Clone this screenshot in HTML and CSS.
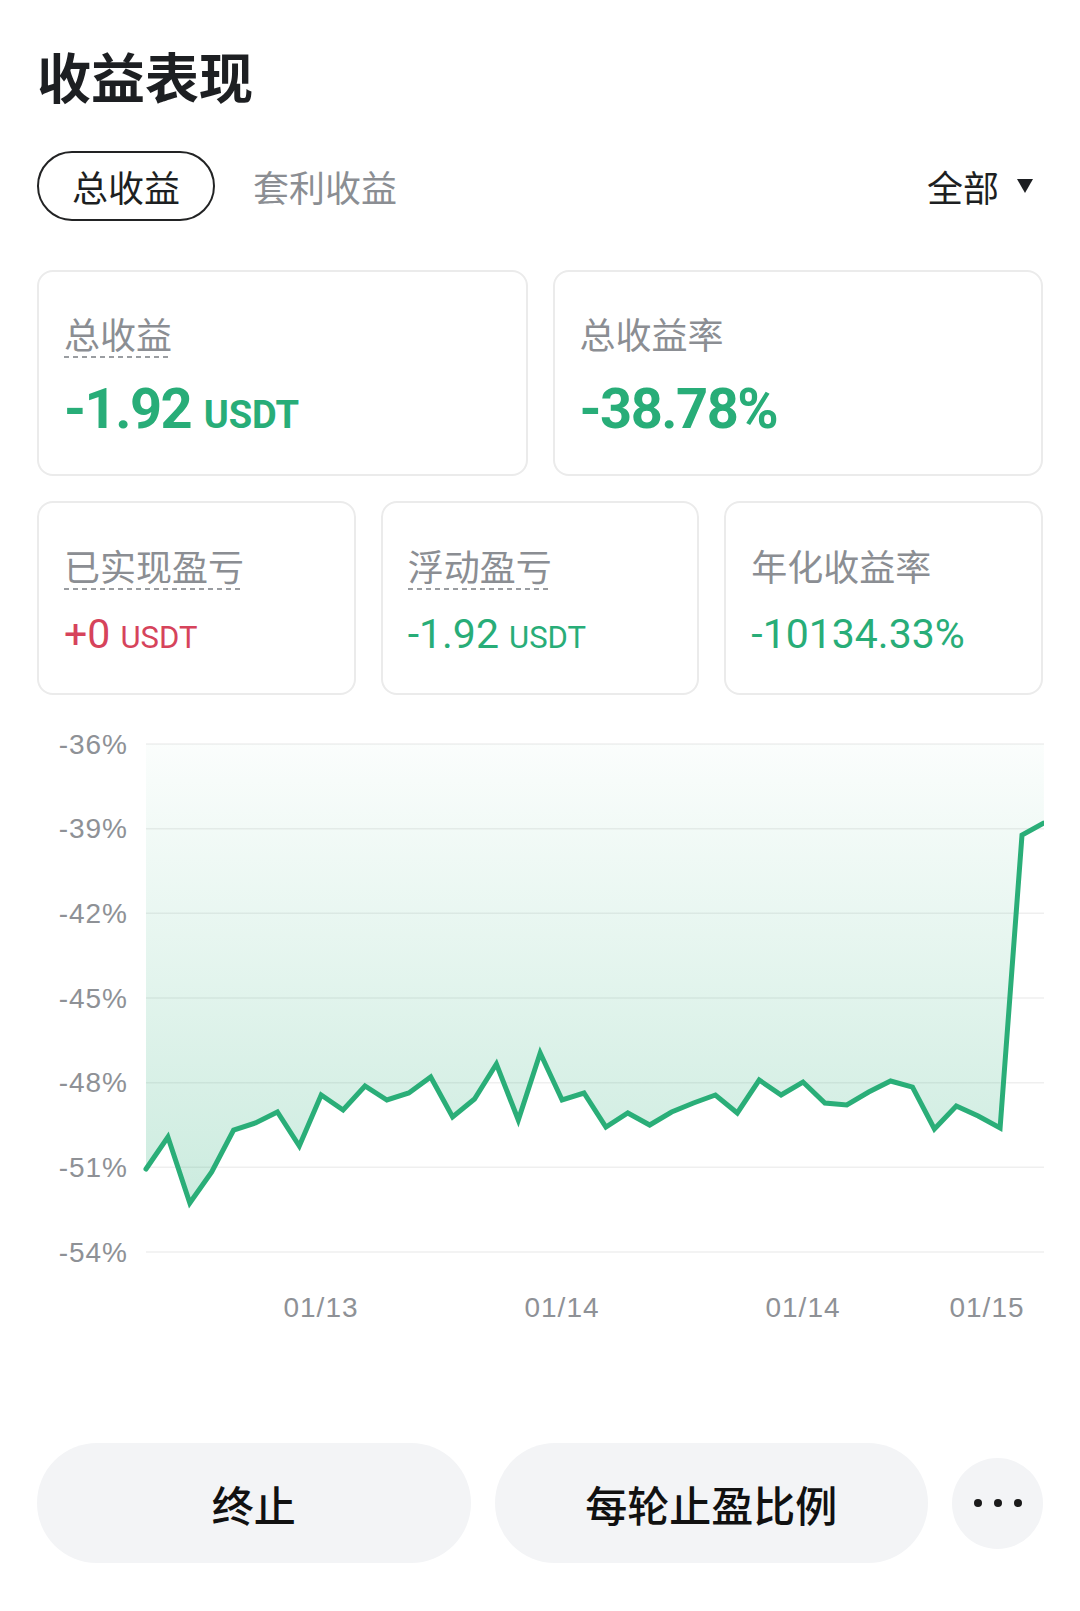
FILE: index.html
```html
<!DOCTYPE html>
<html lang="zh-CN">
<head>
    <meta charset="UTF-8">
    <title>收益表现</title>
    <link rel="stylesheet" href="styles.css">
</head>
<body>
<div class="page">
    <h1 class="title">收益表现</h1>

    <div class="tabs">
        <span class="tab tab-active">总收益</span>
        <span class="tab">套利收益</span>
        <span class="filter">全部<i class="caret"></i></span>
    </div>

    <div class="stats stats-2">
        <div class="card card-lg">
            <div class="label-row"><span class="label dashed">总收益</span></div>
            <div class="value value-lg green">-1.92 <small>USDT</small></div>
        </div>
        <div class="card card-lg">
            <div class="label-row"><span class="label">总收益率</span></div>
            <div class="value value-lg green">-38.78%</div>
        </div>
    </div>

    <div class="stats stats-3">
        <div class="card card-sm">
            <div class="label-row"><span class="label dashed">已实现盈亏</span></div>
            <div class="value value-md red">+0 <small>USDT</small></div>
        </div>
        <div class="card card-sm">
            <div class="label-row"><span class="label dashed">浮动盈亏</span></div>
            <div class="value value-md green">-1.92 <small>USDT</small></div>
        </div>
        <div class="card card-sm">
            <div class="label-row"><span class="label">年化收益率</span></div>
            <div class="value value-md green">-10134.33%</div>
        </div>
    </div>

    <div class="chart">
        <svg class="chart-svg" width="1007" height="620" viewBox="37 720 1007 620">
            <defs>
                <linearGradient id="areaFill" gradientUnits="userSpaceOnUse" x1="0" y1="744" x2="0" y2="1200">
                    <stop offset="0" stop-color="#2bae79" stop-opacity="0.02"/>
                    <stop offset="1" stop-color="#2bae79" stop-opacity="0.24"/>
                </linearGradient>
            </defs>

            <!-- grid -->
            <g class="grid">
                <line x1="146" y1="744" x2="1044" y2="744"/>
                <line x1="146" y1="828.7" x2="1044" y2="828.7"/>
                <line x1="146" y1="913.3" x2="1044" y2="913.3"/>
                <line x1="146" y1="998" x2="1044" y2="998"/>
                <line x1="146" y1="1082.7" x2="1044" y2="1082.7"/>
                <line x1="146" y1="1167.3" x2="1044" y2="1167.3"/>
                <line x1="146" y1="1252" x2="1044" y2="1252"/>
            </g>

            <g class="axis-y">
                <text x="128" y="744">-36%</text>
                <text x="128" y="828.7">-39%</text>
                <text x="128" y="913.3">-42%</text>
                <text x="128" y="998">-45%</text>
                <text x="128" y="1082.7">-48%</text>
                <text x="128" y="1167.3">-51%</text>
                <text x="128" y="1252">-54%</text>
            </g>

            <polygon fill="url(#areaFill)" points="146,1169 167.9,1137 189.8,1203 211.7,1172 233.6,1130 255.5,1123 277.4,1112 299.3,1146 321.2,1095 343.1,1110 365,1086 386.9,1100 408.8,1093 430.7,1077 452.6,1117 474.5,1099 496.4,1064 518.3,1120 540.2,1053 562.1,1100 584,1093 605.9,1127 627.8,1113 649.7,1125 671.6,1112 693.5,1103 715.4,1095 737.3,1113 759.2,1080 781.1,1095 803,1082 824.9,1103 846.8,1105 868.7,1092 890.6,1081 912.5,1087 934.4,1129 956.3,1106 978.2,1116 1000.1,1128 1022,835 1043.9,823 1043.9,744 146,744"/>
            <polyline class="line" points="146,1169 167.9,1137 189.8,1203 211.7,1172 233.6,1130 255.5,1123 277.4,1112 299.3,1146 321.2,1095 343.1,1110 365,1086 386.9,1100 408.8,1093 430.7,1077 452.6,1117 474.5,1099 496.4,1064 518.3,1120 540.2,1053 562.1,1100 584,1093 605.9,1127 627.8,1113 649.7,1125 671.6,1112 693.5,1103 715.4,1095 737.3,1113 759.2,1080 781.1,1095 803,1082 824.9,1103 846.8,1105 868.7,1092 890.6,1081 912.5,1087 934.4,1129 956.3,1106 978.2,1116 1000.1,1128 1022,835 1043.9,823"/>

            <g class="axis-x">
                <text x="321" y="1307">01/13</text>
                <text x="562" y="1307">01/14</text>
                <text x="803" y="1307">01/14</text>
                <text x="987" y="1307">01/15</text>
            </g>
        </svg>
    </div>

    <div class="actions">
        <button class="btn">终止</button>
        <button class="btn">每轮止盈比例</button>
        <button class="more"><i class="dot"></i><i class="dot"></i><i class="dot"></i></button>
    </div>
</div>
</body>
</html>
```

FILE: styles.css
```css
body {
    margin: 0;
    background: #ffffff;
    color: #1d1f22;
    font-family: "Noto Sans CJK SC", "Noto Sans", sans-serif;
}

.page {
    padding: 0 37px;
}

.title {
    margin: 0;
    padding-top: 38px;
    font-size: 54px;
    line-height: 76px;
    font-weight: 700;
}

/* tabs */
.tabs {
    display: flex;
    align-items: center;
    height: 70px;
    margin-top: 37px;
}

.tab {
    font-size: 36px;
    line-height: 1;
    color: #8b8e93;
}

.tab-active {
    display: flex;
    align-items: center;
    box-sizing: border-box;
    height: 70px;
    padding: 0 33px;
    margin-right: 38px;
    border: 2.5px solid #222324;
    border-radius: 35px;
    color: #1d1f22;
}

.filter {
    display: flex;
    align-items: center;
    gap: 18px;
    margin-left: auto;
    margin-right: 10px;
    font-size: 36px;
}

.caret {
    width: 0;
    height: 0;
    border-left: 8.5px solid transparent;
    border-right: 8.5px solid transparent;
    border-top: 14px solid #1d1f22;
}

/* stat cards */
.stats {
    display: grid;
    gap: 25px;
}

.stats-2 {
    grid-template-columns: 1fr 1fr;
    margin-top: 49px;
}

.stats-3 {
    grid-template-columns: repeat(3, 1fr);
    margin-top: 25px;
}

.card {
    box-sizing: border-box;
    padding: 0 25px;
    border: 2px solid #ebebeb;
    border-radius: 16px;
}

.card-lg {
    height: 206px;
    padding-top: 40px;
}

.card-sm {
    height: 194px;
    padding-top: 41px;
}

.label-row {
    display: flex;
}

.label {
    padding-bottom: 4px;
    font-size: 36px;
    line-height: 42px;
    color: #8b8e93;
}

.dashed {
    background: repeating-linear-gradient(90deg, #9a9da1 0 5px, transparent 5px 9px) left bottom / 100% 2px no-repeat;
}

.value {
    font-family: Roboto, "Noto Sans", sans-serif;
    white-space: nowrap;
}

.value-lg {
    margin-top: 19px;
    font-size: 56px;
    line-height: 64px;
    font-weight: 700;
    letter-spacing: -1.5px;
}

.value-lg small {
    font-size: 38px;
    letter-spacing: 0;
}

.value-md {
    margin-top: 20px;
    font-size: 41px;
    line-height: 48px;
    font-weight: 400;
}

.value-md small {
    font-size: 31px;
}

.green {
    color: #28ad78;
}

.red {
    color: #d6435b;
}

/* chart */
.chart {
    margin-top: 25px;
}

.chart-svg {
    display: block;
}

.grid line {
    stroke: #efefef;
    stroke-width: 1.5;
}

.line {
    fill: none;
    stroke: #2aae78;
    stroke-width: 5;
    stroke-linecap: round;
}

.axis-y text,
.axis-x text {
    font-family: "Liberation Sans", Arial, sans-serif;
    font-size: 28px;
    letter-spacing: 1px;
    fill: #8e9196;
    dominant-baseline: central;
}

.axis-y text {
    text-anchor: end;
}

.axis-x text {
    text-anchor: middle;
}

/* bottom buttons */
.actions {
    display: flex;
    align-items: center;
    gap: 24px;
    margin-top: 103px;
}

.btn {
    flex: 1;
    height: 120px;
    border: none;
    border-radius: 60px;
    background: #f3f4f6;
    color: #111111;
    font-family: "Noto Sans CJK SC", sans-serif;
    font-size: 42px;
    font-weight: 500;
}

.more {
    display: flex;
    align-items: center;
    justify-content: center;
    gap: 12px;
    width: 91px;
    height: 91px;
    padding: 0;
    border: none;
    border-radius: 50%;
    background: #f3f4f6;
}

.dot {
    width: 8px;
    height: 8px;
    border-radius: 50%;
    background: #1b1b1b;
}
```
